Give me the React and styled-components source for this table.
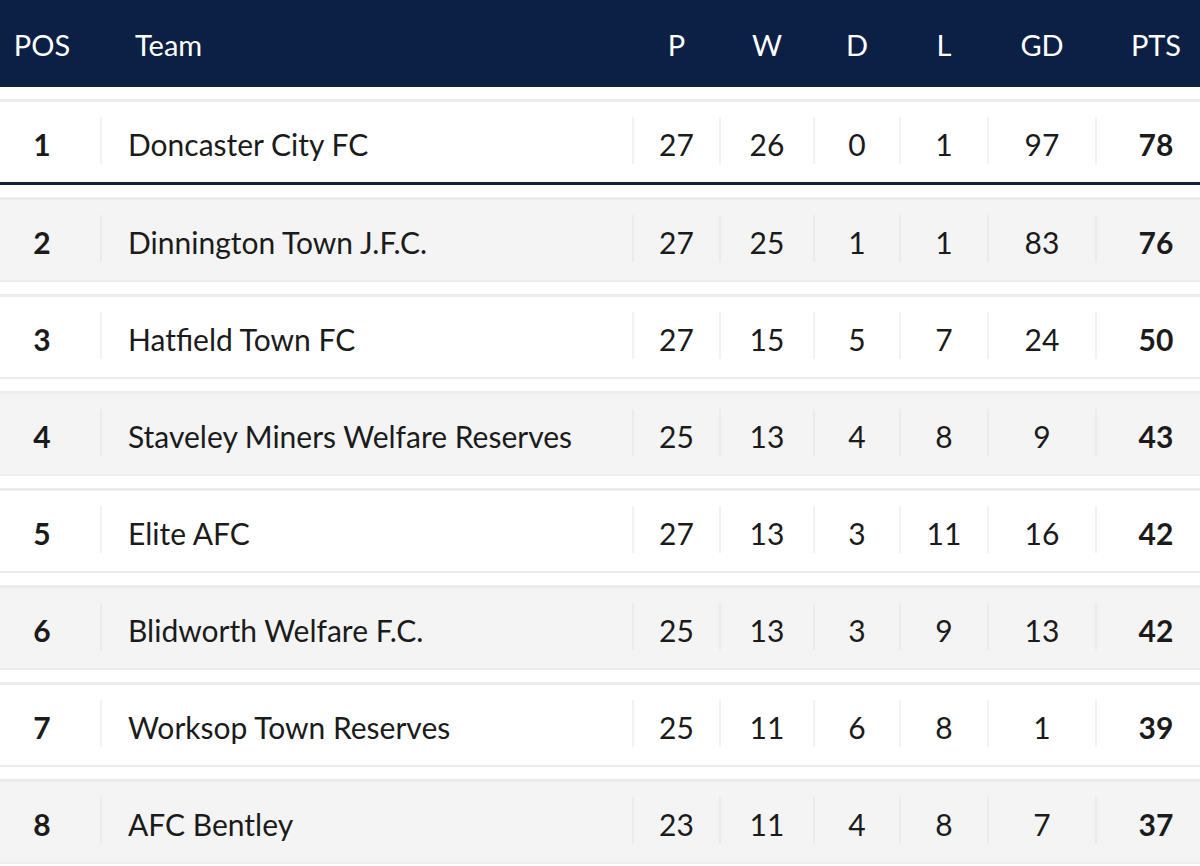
import React from "react";
import styled, { createGlobalStyle } from "styled-components";

const Global = createGlobalStyle`
  html, body { margin: 0; padding: 0; background: #ffffff; }
  body { font-family: Lato, "Noto Sans", sans-serif; color: #1b1b1b; }
`;

const COLS = "101px 532px 87px 94px 86px 88px 108px 104px";

const Table = styled.div`
  width: 1200px;
  display: flex;
  flex-direction: column;
`;

const Header = styled.div`
  display: grid;
  grid-template-columns: ${COLS};
  height: 87px;
  align-items: center;
  background: #0c1f45;
  color: #ffffff;
  font-size: 29px;
  font-weight: 400;
  margin-bottom: 12px;
`;

const HeadCell = styled.div`
  text-align: ${(p) => (p.$left ? "left" : "center")};
  padding-left: ${(p) => p.$pl || 0}px;
  padding-right: ${(p) => p.$pr || 0}px;
  padding-top: 2px;
`;

const Row = styled.div`
  display: grid;
  grid-template-columns: ${COLS};
  height: 80px;
  align-items: center;
  background: ${(p) => (p.$alt ? "#f4f4f4" : "#ffffff")};
  border-top: 3px solid #ececec;
  border-bottom: ${(p) => (p.$leader ? "3px solid #13233f" : "2px solid #ececec")};
  margin-bottom: 12px;
  font-size: 30px;
`;

const Cell = styled.div`
  position: relative;
  height: 100%;
  display: flex;
  align-items: center;
  justify-content: ${(p) => (p.$left ? "flex-start" : "center")};
  padding-left: ${(p) => p.$pl || 0}px;
  padding-right: ${(p) => p.$pr || 0}px;
  padding-top: 4px;
  box-sizing: border-box;
  font-weight: ${(p) => (p.$bold ? 700 : 400)};
  &::before {
    content: ${(p) => (p.$sep ? '""' : "none")};
    position: absolute;
    left: -1px;
    top: 15px;
    bottom: 18px;
    width: 2px;
    background: ${(p) => (p.$altbg ? "#ebebeb" : "#f2f2f2")};
  }
`;

const data = [
  [1, "Doncaster City FC", 27, 26, 0, 1, 97, 78],
  [2, "Dinnington Town J.F.C.", 27, 25, 1, 1, 83, 76],
  [3, "Hatfield Town FC", 27, 15, 5, 7, 24, 50],
  [4, "Staveley Miners Welfare Reserves", 25, 13, 4, 8, 9, 43],
  [5, "Elite AFC", 27, 13, 3, 11, 16, 42],
  [6, "Blidworth Welfare F.C.", 25, 13, 3, 9, 13, 42],
  [7, "Worksop Town Reserves", 25, 11, 6, 8, 1, 39],
  [8, "AFC Bentley", 23, 11, 4, 8, 7, 37],
];

export default function App() {
  return (
    <>
      <Global />
      <Table>
        <Header>
          <HeadCell $pr={17}>POS</HeadCell>
          <HeadCell $left $pl={34}>Team</HeadCell>
          <HeadCell>P</HeadCell>
          <HeadCell>W</HeadCell>
          <HeadCell>D</HeadCell>
          <HeadCell>L</HeadCell>
          <HeadCell>GD</HeadCell>
          <HeadCell $pl={16}>PTS</HeadCell>
        </Header>
        {data.map((r, i) => {
          const alt = i % 2 === 1;
          return (
            <Row key={r[0]} $alt={alt} $leader={i === 0}>
              <Cell $bold $pr={17}>{r[0]}</Cell>
              <Cell $left $pl={27} $sep $altbg={alt}>{r[1]}</Cell>
              <Cell $sep $altbg={alt}>{r[2]}</Cell>
              <Cell $sep $altbg={alt}>{r[3]}</Cell>
              <Cell $sep $altbg={alt}>{r[4]}</Cell>
              <Cell $sep $altbg={alt}>{r[5]}</Cell>
              <Cell $sep $altbg={alt}>{r[6]}</Cell>
              <Cell $sep $altbg={alt} $bold $pl={16}>{r[7]}</Cell>
            </Row>
          );
        })}
      </Table>
    </>
  );
}
